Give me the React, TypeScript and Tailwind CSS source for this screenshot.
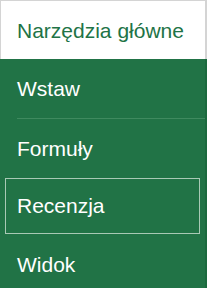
import React from "react";

const font = { fontFamily: '"Liberation Sans", Arial, sans-serif' };

export default function App() {
  return (
    <div className="w-[207px] h-[288px] overflow-hidden bg-[#217346]" style={font}>
      <div className="h-[59px] bg-white border-t border-l border-r-2 border-[#d4d4d4] flex items-center pl-[16px]">
        <span className="text-[21px] text-[#217346] leading-none">Narzędzia główne</span>
      </div>
      <div className="border-r-2 border-[#1b6a3e]">
        <div className="h-[59px] flex items-center pl-[17px] text-white text-[21px]">Wstaw</div>
        <div className="h-px ml-[17px] bg-[#3f8a5f]" />
        <div className="h-[59px] flex items-center pl-[17px] text-white text-[21px]">Formuły</div>
        <div className="mx-[5px] h-[56px] border border-[#a9c9b5] flex items-center pl-[11px] text-white text-[21px]">
          Recenzja
        </div>
        <div className="h-[62px] flex items-center pl-[17px] text-white text-[21px]">Widok</div>
      </div>
    </div>
  );
}
